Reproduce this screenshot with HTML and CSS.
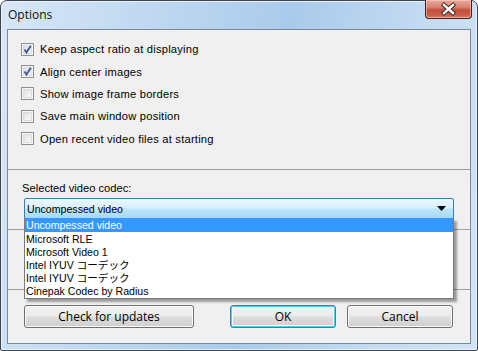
FILE: index.html
```html
<!DOCTYPE html>
<html>
<head>
<meta charset="utf-8">
<link rel="stylesheet" href="styles.css">
</head>
<body>
<div class="window">
  <div class="titlebar">
    <span class="title">Options</span>
    <div class="close">
      <svg width="47" height="19" viewBox="0 0 47 19">
        <path d="M19 5 L28 13 M28 5 L19 13" stroke="#3a2a2a" stroke-width="4.4" stroke-linecap="square"/>
        <path d="M19 5 L28 13 M28 5 L19 13" stroke="#ffffff" stroke-width="2.4" stroke-linecap="square"/>
      </svg>
    </div>
  </div>
  <div class="client">
    <section class="opts">
      <label class="row"><span class="cb checked"><svg width="11" height="11" viewBox="0 0 11 11"><path d="M2.5 5.5 L4.5 8.5 L8.8 1.8" fill="none" stroke="#3d5a9e" stroke-width="1.9"/></svg></span>Keep aspect ratio at displaying</label>
      <label class="row"><span class="cb checked"><svg width="11" height="11" viewBox="0 0 11 11"><path d="M2.5 5.5 L4.5 8.5 L8.8 1.8" fill="none" stroke="#3d5a9e" stroke-width="1.9"/></svg></span>Align center images</label>
      <label class="row"><span class="cb"></span>Show image frame borders</label>
      <label class="row"><span class="cb"></span>Save main window position</label>
      <label class="row"><span class="cb"></span>Open recent video files at starting</label>
    </section>
    <section class="codec">
      <div class="label">Selected video codec:</div>
      <div class="combo-wrap">
        <div class="combo">
          <span>Uncompessed video</span>
          <svg class="arrow" width="9" height="5" viewBox="0 0 9 5"><path d="M0 0 H9 L4.5 5 Z" fill="#000"/></svg>
        </div>
        <ul class="list">
          <li class="sel">Uncompessed video</li>
          <li>Microsoft RLE</li>
          <li>Microsoft Video 1</li>
          <li>Intel IYUV コーデック</li>
          <li>Intel IYUV コーデック</li>
          <li>Cinepak Codec by Radius</li>
        </ul>
      </div>
    </section>
    <section class="extra"></section>
    <section class="buttons">
      <button class="btn upd">Check for updates</button>
      <button class="btn ok">OK</button>
      <button class="btn cancel">Cancel</button>
    </section>
  </div>
</div>
</body>
</html>
```

FILE: styles.css
```css
html, body {
  margin: 0;
  padding: 0;
  background: #ffffff;
}
body {
  font-family: "Liberation Sans", Arial, "Noto Sans CJK JP", sans-serif;
  font-size: 11px;
  color: #000;
}
.window {
  box-sizing: border-box;
  width: 478px;
  height: 351px;
  border: 1px solid #3b4652;
  border-radius: 7px 7px 2px 2px;
  background: linear-gradient(100deg, #d7e7f7 0%, #c2daf1 25%, #a9cbea 55%, #c4dbf2 80%, #d2e4f6 100%);
  box-shadow: inset 1px 1px 0 #e9f2fb, inset -1px -1px 0 #e9f2fb;
  display: flex;
  flex-direction: column;
}
.titlebar {
  height: 28px;
  position: relative;
  display: flex;
  align-items: center;
}
.title {
  margin-left: 7px;
  margin-top: -2px;
  font-family: "Open Sans", "Noto Sans", sans-serif;
  font-size: 12px;
  color: #111;
}
.close {
  position: absolute;
  top: -1px;
  right: 5px;
  width: 45px;
  height: 18px;
  border: 1px solid #4a1d16;
  border-top: none;
  border-radius: 0 0 4px 4px;
  background: linear-gradient(#e9a99b 0%, #d98372 40%, #c24f3a 55%, #c9604a 85%, #d8806c 100%);
  box-shadow: inset 0 0 0 1px rgba(255, 220, 210, 0.5);
  overflow: hidden;
}
.close svg {
  display: block;
  margin: 0 auto;
  position: relative;
  left: -1px;
}
.client {
  margin: 0 6px 6px 6px;
  flex: 1;
  border: 1px solid #7a8a9c;
  background: #f0f0f0;
  display: flex;
  flex-direction: column;
}
.opts {
  height: 140px;
  box-sizing: border-box;
  border-bottom: 1px solid #a0a0a0;
  padding: 8px 0 0 13px;
  display: flex;
  flex-direction: column;
}
.row {
  height: 22.4px;
  display: flex;
  align-items: center;
  gap: 6px;
  font-size: 11.2px;
  letter-spacing: 0.2px;
}
.cb {
  box-sizing: border-box;
  width: 13px;
  height: 13px;
  border: 1px solid #8f8f8f;
  background: linear-gradient(135deg, #d6d6d6 0%, #efefef 55%, #fbfbfb 100%);
  box-shadow: inset 0 0 0 1px #f6f6f6, inset 0 0 0 2px #dcdcdc;
  display: flex;
  align-items: center;
  justify-content: center;
}
.codec {
  height: 60px;
  box-sizing: border-box;
  border-bottom: 1px solid #a0a0a0;
  padding: 11px 0 0 14px;
}
.label {
  height: 14px;
  line-height: 14px;
  font-size: 11.2px;
  margin-bottom: 3px;
}
.combo-wrap {
  position: relative;
  margin-left: 2px;
  width: 430px;
}
.combo {
  box-sizing: border-box;
  height: 21px;
  border: 1px solid #3c7fb1;
  border-radius: 2px;
  background: linear-gradient(#eaf6fd 0%, #d9f0fc 48%, #bee6fd 52%, #a7d9f5 100%);
  display: flex;
  align-items: center;
  padding: 0 6px 0 2px;
  font-size: 10.6px;
}
.combo span { flex: 1; }
.arrow { margin-right: 1px; }
.list {
  position: absolute;
  left: 0;
  top: 20px;
  width: 430px;
  box-sizing: border-box;
  margin: 0;
  padding: 0 0 1px 0;
  list-style: none;
  background: #fff;
  border: 1px solid #7a7a7a;
  border-top: none;
  box-shadow: 3px 3px 2px rgba(0, 0, 0, 0.35);
  z-index: 2;
}
.list li {
  height: 13px;
  line-height: 14px;
  padding-left: 1px;
  font-size: 10.6px;
  color: #000;
  white-space: nowrap;
}
.list li.sel {
  background: #3399ff;
  color: #fff;
  height: 14px;
  line-height: 14px;
}
.extra {
  height: 60px;
  box-sizing: border-box;
  border-bottom: 1px solid #a0a0a0;
}
.buttons {
  flex: 1;
  display: flex;
  align-items: flex-start;
  padding: 15px 17px 0 16px;
}
.btn {
  box-sizing: border-box;
  height: 23px;
  border: 1px solid #707070;
  border-radius: 3px;
  background: linear-gradient(#f2f2f2 0%, #ebebeb 48%, #dddddd 52%, #cfcfcf 100%);
  box-shadow: inset 0 0 0 1px #fcfcfc;
  font-family: "Open Sans", "Noto Sans", sans-serif;
  font-size: 12px;
  color: #000;
  padding: 0;
}
.upd { width: 170px; }
.ok {
  width: 106px;
  margin-left: auto;
  border-color: #3c7fb1;
  box-shadow: inset 0 0 0 1px #48d0fb, inset 0 0 0 2px #f4fbfe;
}
.cancel {
  width: 106px;
  margin-left: 11px;
}
```
